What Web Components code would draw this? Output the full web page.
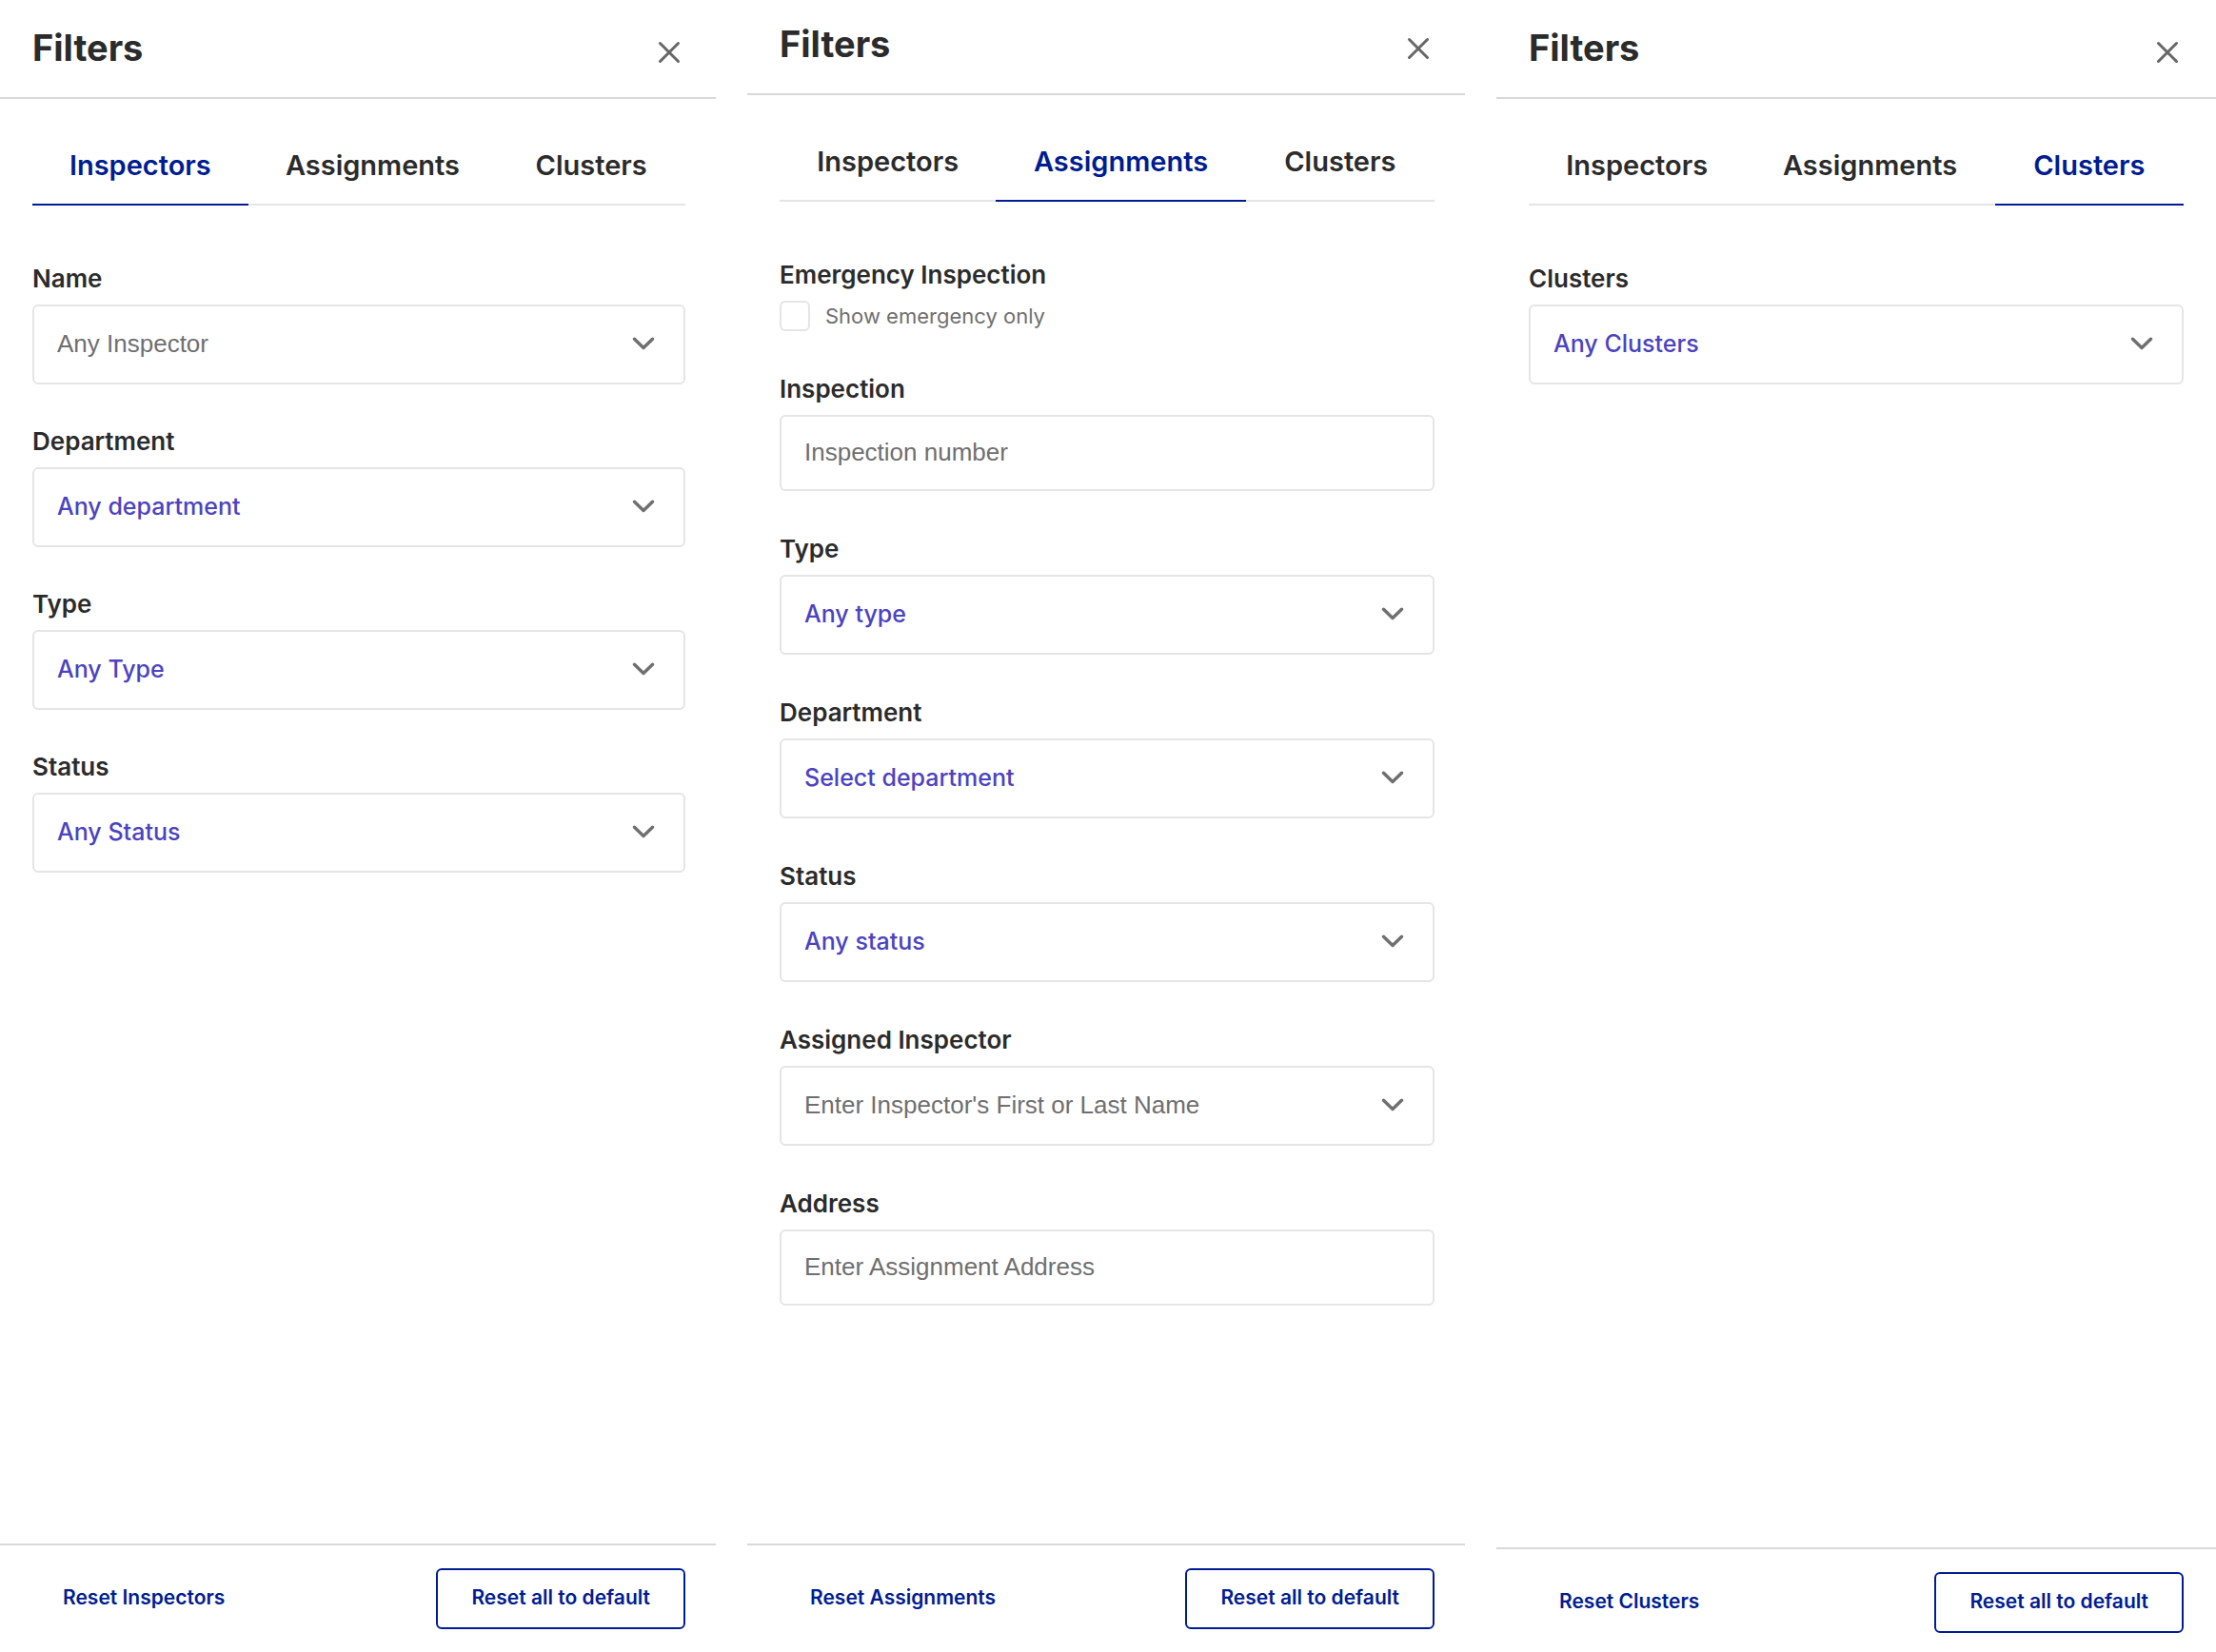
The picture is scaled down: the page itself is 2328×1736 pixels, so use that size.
<!DOCTYPE html>
<html lang="en">
<head>
<meta charset="utf-8">
<title>Filters</title>
<style>
  :root {
    --ink: #2b2b2b;
    --brand: #001c91;
    --value: #4b43bf;
    --muted: #6f6f6f;
    --line: #e5e5e5;
    --divider: #d9d9d9;
  }
  body {
    margin: 0;
    background: #fff;
    color: var(--ink);
    font-family: Inter, "Liberation Sans", sans-serif;
  }
  main {
    display: grid;
    grid-template-columns: 752fr 754fr 756fr;
    gap: 33px;
    min-height: 100vh;
  }
</style>
</head>
<body>
<main>
  <filter-panel tab="Inspectors" class="first">
    <filter-field label="Name" kind="combo" text="Any Inspector"></filter-field>
    <filter-field label="Department" kind="select" text="Any department"></filter-field>
    <filter-field label="Type" kind="select" text="Any Type"></filter-field>
    <filter-field label="Status" kind="select" text="Any Status"></filter-field>
  </filter-panel>
  <filter-panel tab="Assignments" class="second">
    <filter-check label="Emergency Inspection" text="Show emergency only"></filter-check>
    <filter-field label="Inspection" kind="text" text="Inspection number"></filter-field>
    <filter-field label="Type" kind="select" text="Any type"></filter-field>
    <filter-field label="Department" kind="select" text="Select department"></filter-field>
    <filter-field label="Status" kind="select" text="Any status"></filter-field>
    <filter-field label="Assigned Inspector" kind="combo" text="Enter Inspector's First or Last Name"></filter-field>
    <filter-field label="Address" kind="text" text="Enter Assignment Address"></filter-field>
  </filter-panel>
  <filter-panel tab="Clusters" class="third">
    <filter-field label="Clusters" kind="select" text="Any Clusters"></filter-field>
  </filter-panel>
</main>
<script>
  class FilterTabs extends HTMLElement {
    connectedCallback() {
      const active = this.getAttribute('active');
      const tabs = ['Inspectors', 'Assignments', 'Clusters'].map(name =>
        `<button type="button" role="tab" aria-selected="${name === active}">${name}</button>`).join('');
      this.attachShadow({ mode: 'open' }).innerHTML = `
        <style>
          :host { display: block; }
          div { display: grid; grid-template-columns: 227fr 262fr 198fr; }
          button {
            appearance: none; margin: 0; padding: 20px 0; border: 0;
            border-bottom: 2px solid var(--line); background: none; color: var(--ink);
            font: 600 29px/40px Inter, "Liberation Sans", sans-serif; text-align: center;
          }
          button[aria-selected="true"] { color: var(--brand); border-color: var(--brand); }
        </style>
        <div role="tablist">${tabs}</div>`;
    }
  }

  class FilterField extends HTMLElement {
    connectedCallback() {
      const { label, kind, text } = Object.fromEntries([...this.attributes].map(a => [a.name, a.value]));
      const control = kind === 'select'
        ? `<select id="control"><option>${text}</option></select>`
        : `<input id="control" type="text" placeholder="${text}">`;
      const chevron = kind === 'text' ? '' :
        `<svg viewBox="0 0 24 14" aria-hidden="true"><path d="M2.5 2.2l9.5 9.3 9.5-9.3"/></svg>`;
      this.attachShadow({ mode: 'open' }).innerHTML = `
        <style>
          :host { display: flex; flex-direction: column; gap: 8px; }
          label { font-size: 26px; line-height: 38px; font-weight: 600; }
          .box { display: grid; align-items: center; }
          input, select {
            grid-area: 1 / 1; appearance: none; box-sizing: border-box; width: 100%; height: 84px;
            margin: 0; padding: 0 80px 2px 24px; border: 2px solid var(--line); border-radius: 6px;
            background: #fff; color: var(--value);
            font: 500 25px/36px Inter, "Liberation Sans", sans-serif;
          }
          input { font: 400 26px/36px "Liberation Sans", Arial, sans-serif; padding-right: 24px; }
          .text input { height: 80px; }
          input::placeholder { color: var(--muted); opacity: 1; }
          svg {
            grid-area: 1 / 1; justify-self: end; width: 24px; height: 14px; margin-right: 32px;
            margin-bottom: 2px; fill: none; stroke: var(--muted); stroke-width: 3.4;
            stroke-linecap: round; stroke-linejoin: round; pointer-events: none;
          }
        </style>
        <label for="control">${label}</label>
        <div class="box ${kind}">${control}${chevron}</div>`;
    }
  }

  class FilterCheck extends HTMLElement {
    connectedCallback() {
      this.attachShadow({ mode: 'open' }).innerHTML = `
        <style>
          :host { display: flex; flex-direction: column; gap: 8px; }
          .title { font-size: 26px; line-height: 38px; font-weight: 600; }
          .row { display: flex; align-items: center; gap: 16px; }
          input {
            appearance: none; box-sizing: border-box; width: 32px; height: 32px; margin: 0;
            border: 2px solid var(--line); border-radius: 6px; background: #fff;
          }
          label { color: var(--muted); font-size: 22px; line-height: 32px; }
        </style>
        <span class="title">${this.getAttribute('label')}</span>
        <div class="row"><input id="check" type="checkbox"><label for="check">${this.getAttribute('text')}</label></div>`;
    }
  }

  class FilterPanel extends HTMLElement {
    connectedCallback() {
      const tab = this.getAttribute('tab');
      this.attachShadow({ mode: 'open' }).innerHTML = `
        <style>
          :host {
            display: flex; flex-direction: column;
            --top: 22px; --bottom: 24px; --left: 34px; --right: 32px; --gap: 42px;
          }
          :host(.first) { --gap: 41px; }
          :host(.second) { --top: 18px; }
          :host(.third) { --bottom: 20px; --right: 34px; }
          header {
            display: flex; justify-content: space-between; align-items: flex-end;
            padding: var(--top) var(--right) 24px var(--left); border-bottom: 2px solid var(--divider);
          }
          h1 { margin: 0; font-size: 38px; line-height: 56px; font-weight: 700; }
          button {
            appearance: none; margin: 0; border: 0; background: none; color: var(--brand);
            font: 600 21px/28px Inter, "Liberation Sans", sans-serif;
          }
          .close { display: grid; place-items: center; width: 34px; height: 46px; padding: 0; }
          svg { width: 24px; height: 24px; fill: none; stroke: #666; stroke-width: 3; stroke-linecap: round; }
          filter-tabs { margin: 30px var(--right) 0 var(--left); }
          section {
            flex: 1; display: flex; flex-direction: column; gap: var(--gap);
            padding: 58px var(--right) 42px var(--left);
          }
          footer {
            display: flex; justify-content: space-between; align-items: center;
            padding: 24px var(--right) var(--bottom) var(--left); border-top: 2px solid var(--divider);
          }
          .reset { padding: 17px 32px 19px; }
          .all { padding: 15px 35px 17px; border: 2px solid var(--brand); border-radius: 6px; }
        </style>
        <header>
          <h1>Filters</h1>
          <button class="close" type="button" aria-label="Close">
            <svg viewBox="0 0 24 24" aria-hidden="true"><path d="M2.5 2.5l19 19M21.5 2.5l-19 19"/></svg>
          </button>
        </header>
        <filter-tabs active="${tab}"></filter-tabs>
        <section><slot></slot></section>
        <footer>
          <button class="reset" type="button">Reset ${tab}</button>
          <button class="all" type="button">Reset all to default</button>
        </footer>`;
    }
  }

  customElements.define('filter-tabs', FilterTabs);
  customElements.define('filter-field', FilterField);
  customElements.define('filter-check', FilterCheck);
  customElements.define('filter-panel', FilterPanel);
</script>
</body>
</html>
